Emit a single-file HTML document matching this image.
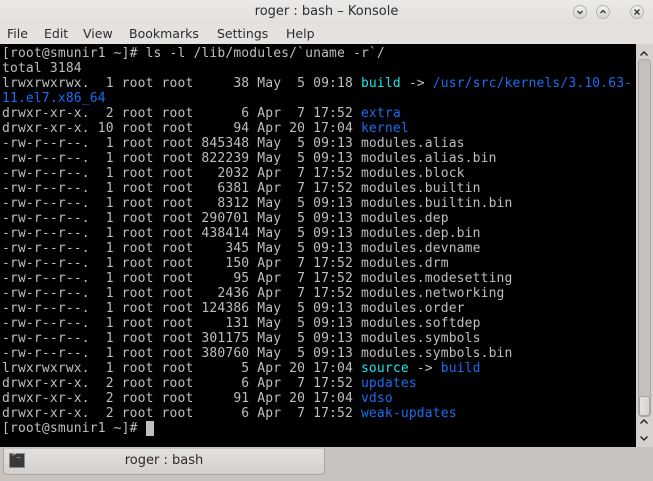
<!DOCTYPE html>
<html><head><style>
body{margin:0;width:653px;height:481px;overflow:hidden;background:#d6d2cf;font-family:"DejaVu Sans","Liberation Sans",sans-serif;position:relative}
#title{position:absolute;left:0;top:0;width:653px;height:24px;background:linear-gradient(#eceae8,#e2dfdc);text-align:center;font-size:13px;line-height:23px;color:#2c2c2c}
.btn{position:absolute;top:5px;width:14px;height:14px;border-radius:50%;background:linear-gradient(#f4f3f2,#d4d1ce);border:1px solid #b8b4b0;box-sizing:border-box}
.btn svg{position:absolute;left:2px;top:2px}
#menu{position:absolute;left:0;top:24px;width:653px;height:20px;background:#e4e1de;font-size:12.5px;color:#2c2c2c}
#menu span{position:absolute;top:2px}
#term{position:absolute;left:0;top:44px;width:636px;height:403px;background:#000;overflow:hidden}
pre{margin:0;position:absolute;left:2px;top:2px;font-family:"DejaVu Sans Mono","Liberation Mono",monospace;font-size:13px;line-height:15px;color:#bfbfbf;letter-spacing:0.15px}
.b{color:#1c6cf0}.c{color:#18e6e6}
#sb{position:absolute;left:636px;top:44px;width:17px;height:403px;background:#d6d2cf}
#groove{position:absolute;left:638px;top:59px;width:13px;height:358px;border-radius:4px;background:#c4c0bc;border:1px solid #aaa6a2;box-sizing:border-box}
#thumb{position:absolute;left:639px;top:396px;width:11px;height:20px;border-radius:3px;background:linear-gradient(90deg,#e6e4e2,#d6d3d0);border:1px solid #a8a4a0;box-sizing:border-box}
#tabbar{position:absolute;left:0;top:447px;width:653px;height:34px;background:#c8c3bf}
#tab{position:absolute;left:3px;top:2px;width:322px;height:26px;background:linear-gradient(#e2e0de,#d4d0cd);border:1px solid #a9a5a1;border-top:none;border-radius:0 0 4px 4px;box-sizing:border-box;text-align:center;font-size:13px;line-height:24px;color:#2c2c2c}
</style></head><body>
<div id="title">roger : bash – Konsole
<div class="btn" style="left:573px"><svg width="8" height="8"><path d="M1.5 3 L4 5.5 L6.5 3" stroke="#333" stroke-width="1.3" fill="none"/></svg></div>
<div class="btn" style="left:596px"><svg width="8" height="8"><path d="M1.5 5 L4 2.5 L6.5 5" stroke="#333" stroke-width="1.3" fill="none"/></svg></div>
<div class="btn" style="left:630px"><svg width="8" height="8"><path d="M1.5 1.5 L6.5 6.5 M6.5 1.5 L1.5 6.5" stroke="#333" stroke-width="1.3" fill="none"/></svg></div>
</div>
<div id="menu"><span style="left:7px">File</span><span style="left:44px">Edit</span><span style="left:83px">View</span><span style="left:129px">Bookmarks</span><span style="left:217px">Settings</span><span style="left:286px">Help</span></div>
<div id="term"><pre>[root@smunir1 ~]# ls -l /lib/modules/`uname -r`/
total 3184
lrwxrwxrwx.  1 root root     38 May  5 09:18 <span class="c">build</span> -&gt; <span class="b">/usr/src/kernels/3.10.63-</span>
<span class="b">11.el7.x86_64</span>
drwxr-xr-x.  2 root root      6 Apr  7 17:52 <span class="b">extra</span>
drwxr-xr-x. 10 root root     94 Apr 20 17:04 <span class="b">kernel</span>
-rw-r--r--.  1 root root 845348 May  5 09:13 modules.alias
-rw-r--r--.  1 root root 822239 May  5 09:13 modules.alias.bin
-rw-r--r--.  1 root root   2032 Apr  7 17:52 modules.block
-rw-r--r--.  1 root root   6381 Apr  7 17:52 modules.builtin
-rw-r--r--.  1 root root   8312 May  5 09:13 modules.builtin.bin
-rw-r--r--.  1 root root 290701 May  5 09:13 modules.dep
-rw-r--r--.  1 root root 438414 May  5 09:13 modules.dep.bin
-rw-r--r--.  1 root root    345 May  5 09:13 modules.devname
-rw-r--r--.  1 root root    150 Apr  7 17:52 modules.drm
-rw-r--r--.  1 root root     95 Apr  7 17:52 modules.modesetting
-rw-r--r--.  1 root root   2436 Apr  7 17:52 modules.networking
-rw-r--r--.  1 root root 124386 May  5 09:13 modules.order
-rw-r--r--.  1 root root    131 May  5 09:13 modules.softdep
-rw-r--r--.  1 root root 301175 May  5 09:13 modules.symbols
-rw-r--r--.  1 root root 380760 May  5 09:13 modules.symbols.bin
lrwxrwxrwx.  1 root root      5 Apr 20 17:04 <span class="c">source</span> -&gt; <span class="b">build</span>
drwxr-xr-x.  2 root root      6 Apr  7 17:52 <span class="b">updates</span>
drwxr-xr-x.  2 root root     91 Apr 20 17:04 <span class="b">vdso</span>
drwxr-xr-x.  2 root root      6 Apr  7 17:52 <span class="b">weak-updates</span>
[root@smunir1 ~]# <span style="background:#bfbfbf"> </span></pre></div>
<div id="sb">
<svg style="position:absolute;left:3px;top:6px" width="10" height="8"><path d="M1.5 5.5 L5 2 L8.5 5.5" stroke="#222" stroke-width="1.4" fill="none"/></svg>
<svg style="position:absolute;left:3px;top:374px" width="10" height="8"><path d="M1.5 5.5 L5 2 L8.5 5.5" stroke="#222" stroke-width="1.4" fill="none"/></svg>
<svg style="position:absolute;left:3px;top:390px" width="10" height="8"><path d="M1.5 2.5 L5 6 L8.5 2.5" stroke="#222" stroke-width="1.4" fill="none"/></svg>
</div>
<div id="groove"></div><div id="thumb"></div>
<div id="tabbar"><div id="tab">roger : bash
<div style="position:absolute;left:5px;top:4px;width:16px;height:15px;background:#3a3a3a;border:1px solid #888;box-sizing:border-box"><span style="position:absolute;left:1px;top:-7px;font-size:7px;color:#ddd;line-height:14px">&gt;_</span></div>
</div></div>
</body></html>
